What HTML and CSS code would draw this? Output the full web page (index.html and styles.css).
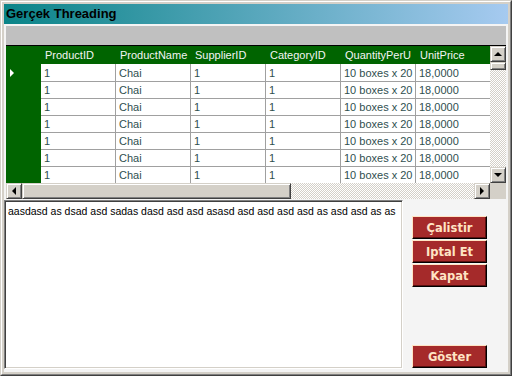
FILE: index.html
```html
<!DOCTYPE html>
<html lang="tr">
<head>
    <meta charset="UTF-8">
    <title>Gerçek Threading</title>
    <link rel="stylesheet" href="styles.css">
</head>
<body>
    <div class="window">
        <div class="frame">
            <div class="titlebar">Gerçek Threading</div>
            <div class="client">
                <div class="grid">
                    <div class="grid-caption"></div>
                    <div class="grid-main">
                        <div class="grid-left">
                            <div class="grid-view">
                                <div class="grid-row grid-head">
                                    <div class="row-head"></div>
                                    <div class="cell">ProductID</div>
                                    <div class="cell">ProductName</div>
                                    <div class="cell">SupplierID</div>
                                    <div class="cell">CategoryID</div>
                                    <div class="cell">QuantityPerU</div>
                                    <div class="cell">UnitPrice</div>
                                </div>
                                <div class="grid-row first">
                                    <div class="row-head"><span class="current"></span></div>
                                    <div class="cell">1</div><div class="cell">Chai</div><div class="cell">1</div>
                                    <div class="cell">1</div><div class="cell">10 boxes x 20</div><div class="cell">18,0000</div>
                                </div>
                                <div class="grid-row">
                                    <div class="row-head"></div>
                                    <div class="cell">1</div><div class="cell">Chai</div><div class="cell">1</div>
                                    <div class="cell">1</div><div class="cell">10 boxes x 20</div><div class="cell">18,0000</div>
                                </div>
                                <div class="grid-row">
                                    <div class="row-head"></div>
                                    <div class="cell">1</div><div class="cell">Chai</div><div class="cell">1</div>
                                    <div class="cell">1</div><div class="cell">10 boxes x 20</div><div class="cell">18,0000</div>
                                </div>
                                <div class="grid-row">
                                    <div class="row-head"></div>
                                    <div class="cell">1</div><div class="cell">Chai</div><div class="cell">1</div>
                                    <div class="cell">1</div><div class="cell">10 boxes x 20</div><div class="cell">18,0000</div>
                                </div>
                                <div class="grid-row">
                                    <div class="row-head"></div>
                                    <div class="cell">1</div><div class="cell">Chai</div><div class="cell">1</div>
                                    <div class="cell">1</div><div class="cell">10 boxes x 20</div><div class="cell">18,0000</div>
                                </div>
                                <div class="grid-row">
                                    <div class="row-head"></div>
                                    <div class="cell">1</div><div class="cell">Chai</div><div class="cell">1</div>
                                    <div class="cell">1</div><div class="cell">10 boxes x 20</div><div class="cell">18,0000</div>
                                </div>
                                <div class="grid-row">
                                    <div class="row-head"></div>
                                    <div class="cell">1</div><div class="cell">Chai</div><div class="cell">1</div>
                                    <div class="cell">1</div><div class="cell">10 boxes x 20</div><div class="cell">18,0000</div>
                                </div>
                            </div>
                            <div class="hscroll">
                                <div class="sb-btn"><span class="arrow left"></span></div>
                                <div class="sb-btn hthumb"></div>
                                <div class="track"></div>
                                <div class="sb-btn"><span class="arrow right"></span></div>
                            </div>
                        </div>
                        <div class="grid-side">
                            <div class="vscroll">
                                <div class="sb-btn"><span class="arrow up"></span></div>
                                <div class="sb-btn vthumb"></div>
                                <div class="track"></div>
                                <div class="sb-btn"><span class="arrow down"></span></div>
                            </div>
                            <div class="corner"></div>
                        </div>
                    </div>
                </div>

                <div class="lower">
                    <div class="textbox">aasdasd as dsad asd sadas dasd asd asd asasd asd asd asd asd as asd asd as as</div>
                    <div class="actions">
                        <button class="red-btn">Çalistir</button>
                        <button class="red-btn">Iptal Et</button>
                        <button class="red-btn">Kapat</button>
                        <button class="red-btn show-btn">Göster</button>
                    </div>
                </div>
            </div>
        </div>
    </div>
</body>
</html>
```

FILE: styles.css
```css
body {
    margin: 0;
    font-family: "Liberation Sans", Arial, sans-serif;
}

.window {
    width: 512px;
    height: 376px;
    box-sizing: border-box;
    border: 1px solid;
    border-color: #d4d0c8 #404040 #404040 #d4d0c8;
}

.frame {
    height: 100%;
    box-sizing: border-box;
    border: 1px solid;
    border-color: #fff #808080 #808080 #fff;
    padding: 2px;
    background: #d4d0c8;
    display: flex;
    flex-direction: column;
}

.titlebar {
    height: 20px;
    flex: none;
    background: linear-gradient(to right, #0a8488, #a6caf0);
    color: #000;
    font-weight: bold;
    font-size: 13px;
    line-height: 20px;
    padding-left: 2px;
}

.client {
    flex: 1;
    background: #f4f4f4;
    display: flex;
    flex-direction: column;
}

/* data grid */
.grid {
    margin: 2px 2px 0;
    height: 173px;
    display: flex;
    flex-direction: column;
    font-size: 11px;
}

.grid-caption {
    height: 19px;
    background: #c0c0c0;
    border-bottom: 1px solid #000;
    flex: none;
}

.grid-main {
    flex: 1;
    display: flex;
    min-height: 0;
}

.grid-left {
    flex: 1;
    display: flex;
    flex-direction: column;
    min-width: 0;
}

.grid-view {
    height: 137px;
    overflow: hidden;
    background: #006400;
}

.grid-row {
    display: flex;
    height: 17px;
    box-sizing: border-box;
}

.grid-row.first {
    height: 18px;
}

.grid-row .cell {
    flex: none;
    width: 75px;
    box-sizing: border-box;
    background: #fff;
    color: #2f4f4f;
    border-right: 1px solid #a0a0a0;
    border-bottom: 1px solid #a0a0a0;
    padding-left: 3px;
    line-height: 16px;
    white-space: nowrap;
    overflow: hidden;
}

.grid-row.first .cell {
    padding-top: 1px;
}

.grid-head {
    height: 18px;
}

.grid-head .cell {
    background: #006400;
    color: #f4f4f4;
    border: none;
    padding-left: 4px;
    line-height: 18px;
}

.row-head {
    flex: none;
    width: 35px;
    background: #006400;
    display: flex;
    align-items: center;
    padding-left: 4px;
    box-sizing: border-box;
}

.current {
    width: 0;
    height: 0;
    border-top: 4px solid transparent;
    border-bottom: 4px solid transparent;
    border-left: 4px solid #fff;
}

/* scrollbars */
.sb-btn {
    flex: none;
    width: 16px;
    height: 16px;
    box-sizing: border-box;
    background: #d4d0c8;
    border: 1px solid;
    border-color: #d4d0c8 #404040 #404040 #d4d0c8;
    box-shadow: inset 1px 1px #fff, inset -1px -1px #808080;
    display: flex;
    align-items: center;
    justify-content: center;
}

.track {
    flex: 1;
    background-color: #fff;
    background-image: repeating-conic-gradient(#d4d0c8 0 25%, #fff 0 50%);
    background-size: 2px 2px;
}

.hscroll {
    height: 16px;
    display: flex;
}

.hthumb {
    width: 269px;
}

.grid-side {
    width: 16px;
    display: flex;
    flex-direction: column;
}

.vscroll {
    height: 137px;
    display: flex;
    flex-direction: column;
}

.vthumb {
    height: 8px;
}

.corner {
    flex: 1;
    background: #d4d0c8;
}

.arrow {
    width: 0;
    height: 0;
}

.arrow.up {
    border-left: 4px solid transparent;
    border-right: 4px solid transparent;
    border-bottom: 4px solid #000;
}

.arrow.down {
    border-left: 4px solid transparent;
    border-right: 4px solid transparent;
    border-top: 4px solid #000;
}

.arrow.left {
    border-top: 4px solid transparent;
    border-bottom: 4px solid transparent;
    border-right: 4px solid #000;
}

.arrow.right {
    border-top: 4px solid transparent;
    border-bottom: 4px solid transparent;
    border-left: 4px solid #000;
}

/* lower part */
.lower {
    flex: 1;
    display: flex;
    margin-top: 1px;
    margin-bottom: 3px;
}

.textbox {
    width: 399px;
    flex: none;
    box-sizing: border-box;
    background: #fff;
    border: 1px solid;
    border-color: #808080 #fff #fff #808080;
    box-shadow: inset 1px 1px #404040, inset -1px -1px #d4d0c8;
    padding: 4px 1px 4px 3px;
    font-size: 10.5px;
    line-height: 13px;
    color: #000;
}

.actions {
    flex: 1;
    display: flex;
    flex-direction: column;
    padding: 16px 0 1px 9px;
}

.red-btn {
    width: 75px;
    height: 23px;
    margin-bottom: 1px;
    box-sizing: border-box;
    background: #a52a2a;
    color: #ffe4c4;
    font-family: "DejaVu Sans", sans-serif;
    font-weight: bold;
    font-size: 11.5px;
    border: 1px solid;
    border-color: #ffe4c4 #000 #000 #ffe4c4;
    box-shadow: inset -1px -1px #5a1010;
    padding: 0;
}

.show-btn {
    margin-top: auto;
    margin-bottom: 0;
}
```
